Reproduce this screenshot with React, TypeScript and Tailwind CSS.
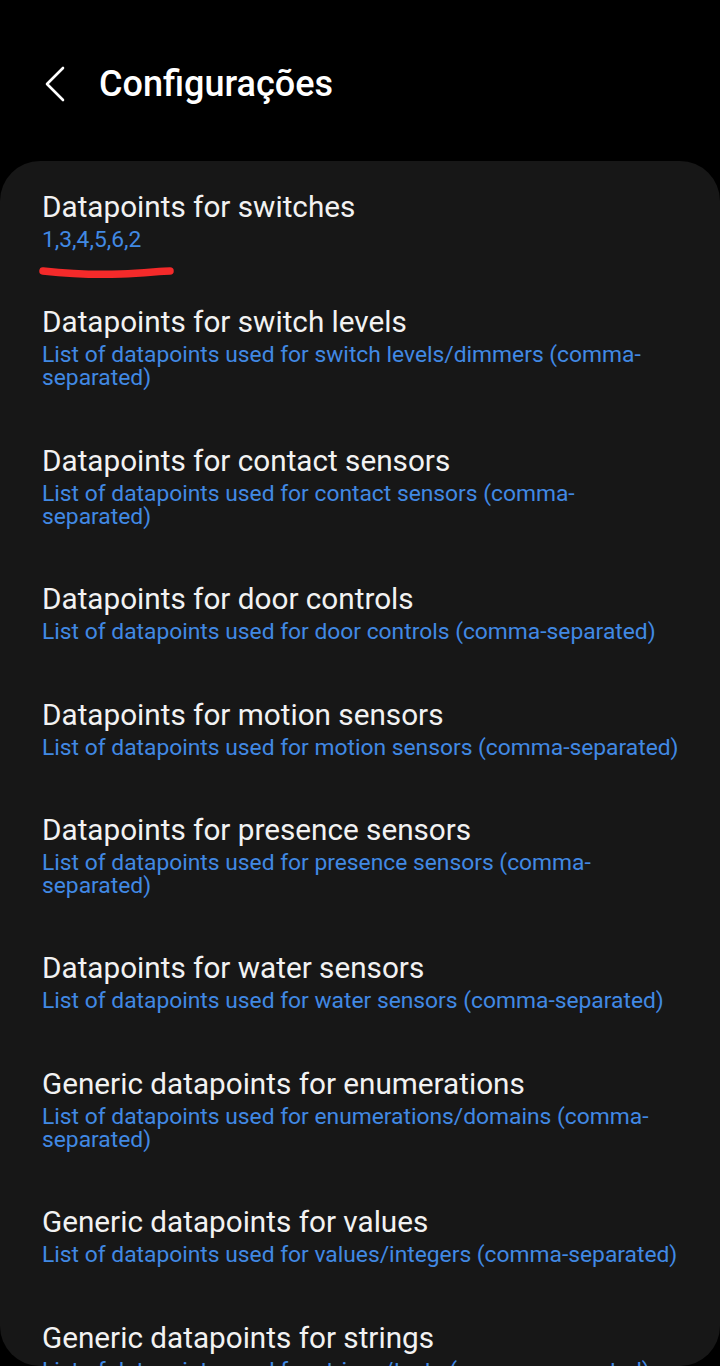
type Setting = {
  title: string
  summary: string
}

const settings: Setting[] = [
  { title: 'Datapoints for switches', summary: '1,3,4,5,6,2' },
  {
    title: 'Datapoints for switch levels',
    summary: 'List of datapoints used for switch levels/dimmers (comma-separated)',
  },
  {
    title: 'Datapoints for contact sensors',
    summary: 'List of datapoints used for contact sensors (comma-separated)',
  },
  {
    title: 'Datapoints for door controls',
    summary: 'List of datapoints used for door controls (comma-separated)',
  },
  {
    title: 'Datapoints for motion sensors',
    summary: 'List of datapoints used for motion sensors (comma-separated)',
  },
  {
    title: 'Datapoints for presence sensors',
    summary: 'List of datapoints used for presence sensors (comma-separated)',
  },
  {
    title: 'Datapoints for water sensors',
    summary: 'List of datapoints used for water sensors (comma-separated)',
  },
  {
    title: 'Generic datapoints for enumerations',
    summary: 'List of datapoints used for enumerations/domains (comma-separated)',
  },
  {
    title: 'Generic datapoints for values',
    summary: 'List of datapoints used for values/integers (comma-separated)',
  },
  {
    title: 'Generic datapoints for strings',
    summary: 'List of datapoints used for strings/texts (comma-separated)',
  },
]

// hand-drawn red underline annotation
function RedMark() {
  return (
    <svg
      className="pointer-events-none absolute left-[36px] top-[99px]"
      width="142"
      height="22"
      viewBox="0 0 142 22"
    >
      <path
        d="M7 10 C 35 13, 60 14, 85 13 S 125 10, 134 10"
        fill="none"
        stroke="#f42a2a"
        strokeWidth="7.5"
        strokeLinecap="round"
      />
    </svg>
  )
}

export default function App() {
  return (
    <div className="flex h-[1366px] flex-col overflow-hidden bg-black font-['Roboto',sans-serif]">
      <header className="flex h-[161px] shrink-0 items-center pt-[7px] pl-[44px]">
        <svg width="22" height="36" viewBox="0 0 22 36" className="shrink-0">
          <path
            d="M19 2 L3 18 L19 34"
            fill="none"
            stroke="#ffffff"
            strokeWidth="2.6"
            strokeLinecap="round"
            strokeLinejoin="round"
          />
        </svg>
        <h1 className="ml-[33px] text-[36px] leading-[40px] font-medium text-white">
          Configurações
        </h1>
      </header>
      <div className="flex-1 overflow-hidden rounded-[40px] bg-[#171717] pt-[1px]">
        {settings.map((s, i) => (
          <div key={s.title} className="relative pl-[42px] pr-[41px] pt-[27px] pb-[26.4px]">
            <p className="text-[29.7px] leading-[35px] text-[#f2f2f2]">{s.title}</p>
            <p className="mt-[4px] text-[22.8px] leading-[23px] text-[#4189e4]">{s.summary}</p>
            {i === 0 && <RedMark />}
          </div>
        ))}
      </div>
    </div>
  )
}
